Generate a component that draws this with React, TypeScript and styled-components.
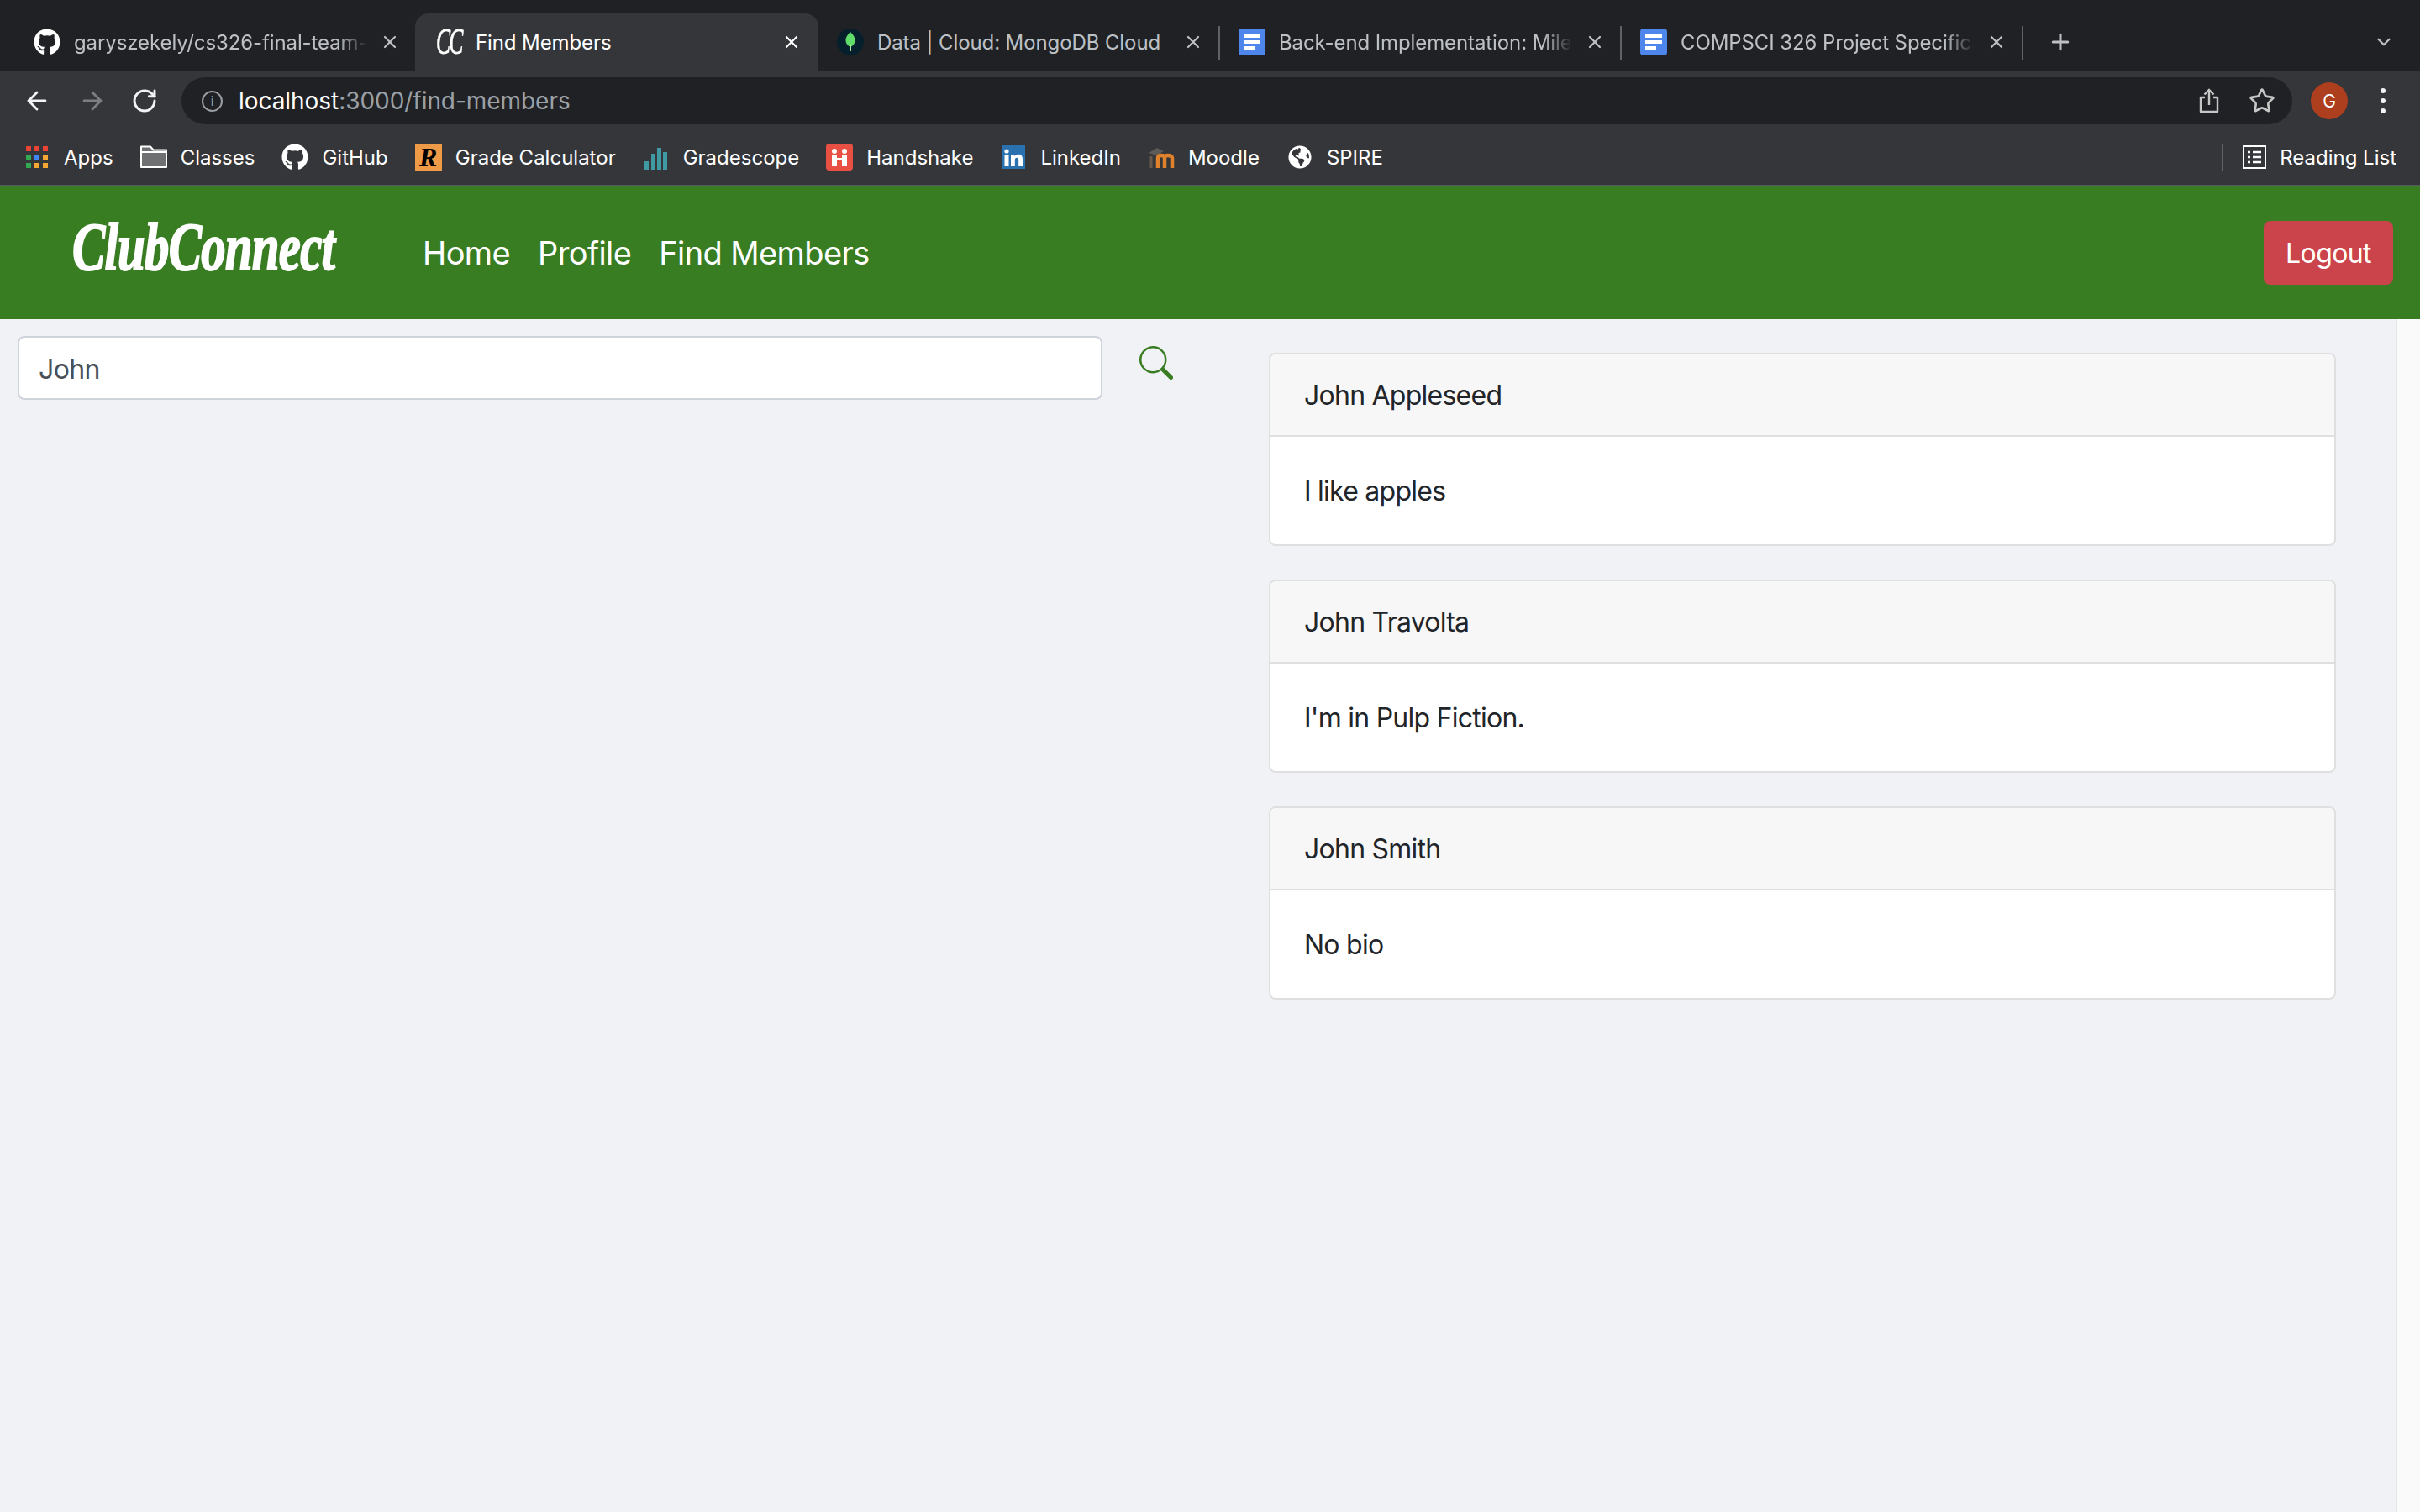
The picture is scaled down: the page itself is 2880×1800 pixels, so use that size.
import React from 'react';
import styled, { createGlobalStyle } from 'styled-components';
import { ArrowLeft, ArrowRight, ChevronDown, Plus, RotateCw, Star, X } from 'lucide-react';
import { BsSearch } from 'react-icons/bs';
import { FaGithub, FaGlobeAmericas } from 'react-icons/fa';

const GlobalStyle = createGlobalStyle`
  html, body {
    margin: 0;
    padding: 0;
    width: 2880px;
    height: 1800px;
    overflow: hidden;
    font-family: Inter, "Liberation Sans", sans-serif;
  }
  * { box-sizing: border-box; }
`;

const Page = styled.div`
  width: 2880px;
  height: 1800px;
  display: flex;
  flex-direction: column;
  background: #f0f2f5;
`;

/* browser chrome */
const TabStrip = styled.div`
  height: 84px;
  flex: none;
  display: flex;
  align-items: flex-end;
  padding-left: 16px;
  background: #202124;
`;

const Tab = styled.div<{ $active?: boolean; $divider?: boolean }>`
  position: relative;
  width: ${(p) => (p.$active ? 480 : 478)}px;
  height: 68px;
  flex: none;
  margin-right: ${(p) => (p.$active ? -2 : 0)}px;
  display: flex;
  align-items: center;
  padding: 0 ${(p) => (p.$active ? 20 : 18)}px 0 24px;
  border-radius: 16px 16px 0 0;
  background: ${(p) => (p.$active ? '#35363a' : 'transparent')};
  color: ${(p) => (p.$active ? '#ffffff' : '#bdc1c6')};

  ${(p) =>
    p.$divider &&
    `&::after {
      content: '';
      position: absolute;
      right: -2px;
      top: 15px;
      width: 2px;
      height: 40px;
      background: #5f6368;
    }`}
`;

const TabIcon = styled.span`
  width: 32px;
  height: 32px;
  flex: none;
  display: flex;
  align-items: center;
  justify-content: center;
  margin-right: 16px;
  color: #ffffff;
`;

const CcMark = styled.span`
  flex: none;
  font-family: "Liberation Serif", serif;
  font-style: italic;
  font-size: 44px;
  line-height: 32px;
  letter-spacing: -3px;
  transform: scaleX(0.58);
  color: #ffffff;
  -webkit-text-stroke: 0.8px #ffffff;
`;

const TabTitle = styled.span<{ $fade?: boolean }>`
  flex: 1;
  min-width: 0;
  overflow: hidden;
  white-space: nowrap;
  font-size: 24px;
  letter-spacing: -0.1px;
  ${(p) =>
    p.$fade &&
    `mask-image: linear-gradient(to right, #000 90%, transparent 100%);`}
`;

const TabClose = styled.span`
  width: 24px;
  height: 24px;
  flex: none;
  margin-left: 15px;
  display: flex;
  align-items: center;
  justify-content: center;
  color: inherit;
`;

const NewTab = styled.span`
  height: 68px;
  flex: none;
  margin-left: 31px;
  display: flex;
  align-items: center;
  color: #bdc1c6;
`;

const TabMenu = styled.span`
  height: 68px;
  flex: none;
  margin-left: auto;
  margin-right: 30px;
  display: flex;
  align-items: center;
  color: #bdc1c6;
`;

const Toolbar = styled.div`
  height: 76px;
  flex: none;
  display: flex;
  align-items: center;
  gap: 26px;
  padding: 0 30px 4px 24px;
  background: #35363a;
`;

const NavButton = styled.span<{ $dim?: boolean; $width?: number }>`
  width: ${(p) => p.$width ?? 40}px;
  flex: none;
  display: flex;
  justify-content: center;
  color: ${(p) => (p.$dim ? '#7c7e82' : '#f1f3f4')};
`;

const AddressBar = styled.div`
  flex: 1;
  height: 56px;
  margin-left: 2px;
  margin-right: -4px;
  display: flex;
  align-items: center;
  padding: 0 20px 0 24px;
  border-radius: 28px;
  background: #202124;
`;

const InfoIcon = styled.span`
  width: 25px;
  height: 25px;
  flex: none;
  margin-right: 19px;
  display: flex;
  align-items: center;
  justify-content: center;
  border: 2.5px solid #9aa0a6;
  border-radius: 50%;
  color: #9aa0a6;
  font-size: 15px;
  line-height: 1;
`;

const Url = styled.span`
  font-size: 28px;
  letter-spacing: -0.05px;
  color: #9aa0a6;

  b {
    font-weight: 400;
    color: #ffffff;
  }
`;

const BarActions = styled.span`
  margin-left: auto;
  display: flex;
  align-items: center;
  gap: 35px;
  color: #c4c7c5;
`;

const Avatar = styled.span`
  width: 44px;
  height: 44px;
  flex: none;
  display: flex;
  align-items: center;
  justify-content: center;
  border-radius: 50%;
  background: #ad3f1f;
  color: #ffffff;
  font-size: 21px;
`;

const MenuDots = styled.span`
  width: 6px;
  flex: none;
  margin-left: 13px;
  margin-right: 11px;
  display: flex;
  flex-direction: column;
  gap: 6px;

  i {
    width: 6px;
    height: 6px;
    border-radius: 50%;
    background: #f1f3f4;
  }
`;

const BookmarkBar = styled.div`
  height: 62px;
  flex: none;
  display: flex;
  align-items: center;
  gap: 32px;
  padding: 0 28px 6px 28px;
  border-bottom: 2px solid #5a5b5e;
  background: #35363a;
`;

const Bookmark = styled.span`
  display: flex;
  align-items: center;
  gap: 16px;
  color: #ffffff;
  font-size: 24px;
  white-space: nowrap;
`;

const BookmarkIcon = styled.span`
  width: 32px;
  height: 32px;
  flex: none;
  display: flex;
  align-items: center;
  justify-content: center;
  color: #ffffff;
`;

const RMark = styled.span`
  width: 32px;
  height: 32px;
  display: flex;
  align-items: center;
  justify-content: center;
  background: #ef9a47;
  color: #000000;
  font-family: "Liberation Serif", serif;
  font-style: italic;
  font-weight: 700;
  font-size: 32px;
`;

const ReadingList = styled(Bookmark)`
  height: 32px;
  margin-left: auto;
  padding-left: 23px;
  border-left: 2px solid #5f6368;
`;

/* app */
const NavBar = styled.header`
  height: 158px;
  flex: none;
  display: flex;
  align-items: center;
  padding: 0 32px 0 86px;
  background: #387d22;
`;

const Brand = styled.span`
  width: 417px;
  flex: none;
  margin-top: -14px;
  font-family: "Liberation Serif", serif;
  font-style: italic;
  font-weight: 700;
  font-size: 80px;
  letter-spacing: -1px;
  line-height: 1;
  white-space: nowrap;
  color: #ffffff;
  -webkit-text-stroke: 2px #ffffff;
  transform: scaleX(0.735);
  transform-origin: left center;
`;

const NavLinks = styled.nav`
  display: flex;
  gap: 33px;
`;

const NavLink = styled.a`
  font-size: 38px;
  letter-spacing: -0.6px;
  color: #ffffff;
`;

const LogoutButton = styled.button`
  width: 154px;
  height: 76px;
  margin-left: auto;
  border: none;
  border-radius: 8px;
  background: #cc444b;
  color: #ffffff;
  font-family: inherit;
  font-size: 32px;
  letter-spacing: -0.6px;
`;

const Main = styled.main`
  flex: 1;
  display: flex;
`;

const SearchPanel = styled.section`
  width: 1510px;
  flex: none;
  display: flex;
  align-items: flex-start;
  gap: 44px;
  padding: 20px 0 0 21px;
`;

const SearchInput = styled.input`
  width: 1291px;
  height: 76px;
  flex: none;
  padding: 2px 23px 0;
  border: 2px solid #ced4da;
  border-radius: 8px;
  outline: none;
  background: #ffffff;
  color: #495057;
  font-family: inherit;
  font-size: 32px;
  letter-spacing: -0.6px;
`;

const SearchButton = styled.span`
  display: flex;
  margin-top: 12px;
  color: #387d22;
`;

const CardList = styled.section`
  width: 1270px;
  flex: none;
  display: flex;
  flex-direction: column;
  gap: 40px;
  padding-top: 40px;
`;

const Card = styled.article`
  height: 230px;
  display: flex;
  flex-direction: column;
  border: 2px solid #dfdfdf;
  border-radius: 8px;
  background: #ffffff;
  overflow: hidden;
  color: #212529;
  font-size: 32px;
  letter-spacing: -0.75px;
`;

const CardHeader = styled.div`
  height: 98px;
  flex: none;
  display: flex;
  align-items: center;
  padding: 0 40px;
  border-bottom: 2px solid #dfdfdf;
  background: #f7f7f7;
`;

const CardBody = styled.div`
  flex: 1;
  display: flex;
  align-items: center;
  padding: 0 40px;
`;

const Scrollbar = styled.div`
  width: 29px;
  flex: none;
  margin-left: auto;
  border-left: 2px solid #e8e8e8;
  background: #fafafa;
`;

const DocIcon = () => (
  <svg width="32" height="32" viewBox="0 0 32 32">
    <rect width="32" height="32" rx="4" fill="#4f86ec" />
    <rect x="6" y="7" width="20" height="4" fill="#fff" />
    <rect x="6" y="14" width="20" height="4" fill="#fff" />
    <rect x="6" y="21" width="13" height="4" fill="#fff" />
  </svg>
);

const MongoIcon = () => (
  <svg width="32" height="32" viewBox="0 0 32 32">
    <circle cx="16" cy="16" r="16" fill="#061f2c" />
    <path d="M16 4c5 5 7 9 4.500 14-1 2-3 3-4.500 4-1.500-1-3.500-2-4.500-4C9 13 11 9 16 4z" fill="#5fdc6a" />
    <rect x="15" y="20" width="2" height="7" fill="#a7e8a0" />
  </svg>
);

const AppsIcon = () => (
  <svg width="26" height="26" viewBox="0 0 26 26">
    {[
      ['#ea4335', '#ea4335', '#ea4335'],
      ['#34a853', '#4285f4', '#f4a733'],
      ['#34a853', '#f4a733', '#f4a733'],
    ].map((row, y) =>
      row.map((fill, x) => (
        <rect key={`${x}-${y}`} x={x * 10} y={y * 10} width="6" height="6" fill={fill} />
      )),
    )}
  </svg>
);

const FolderIcon = () => (
  <svg width="32" height="28" viewBox="0 0 32 28">
    <path d="M1 26V1.500h11l3.500 4H31V26z" fill="#6f7072" stroke="#fff" strokeWidth="2" strokeLinejoin="round" />
    <path d="M1 8h30" stroke="#fff" strokeWidth="2" />
  </svg>
);

const GradescopeIcon = () => (
  <svg width="30" height="30" viewBox="0 0 30 30">
    <rect x="1" y="20" width="5" height="10" fill="#3f9aa3" />
    <rect x="9" y="11" width="5" height="19" fill="#3f9aa3" />
    <rect x="16" y="4" width="5" height="26" fill="#3f9aa3" />
    <rect x="23" y="9" width="5" height="21" fill="#3f9aa3" />
  </svg>
);

const HandshakeIcon = () => (
  <svg width="32" height="32" viewBox="0 0 32 32">
    <rect width="32" height="32" rx="4" fill="#e94f43" />
    <circle cx="10" cy="9" r="3" fill="#fff" />
    <circle cx="22" cy="9" r="3" fill="#fff" />
    <rect x="7" y="14" width="6" height="13" fill="#fff" />
    <rect x="19" y="14" width="6" height="13" fill="#fff" />
    <rect x="12" y="17" width="8" height="3" fill="#fff" />
  </svg>
);

const LinkedInIcon = () => (
  <svg width="28" height="28" viewBox="0 0 28 28">
    <rect width="28" height="28" fill="#2a71b0" />
    <circle cx="6" cy="7" r="2.600" fill="#fff" />
    <rect x="3.500" y="11" width="5" height="14" fill="#fff" />
    <path d="M11 11h4.600v2c1-1.500 2.400-2.300 4.400-2.300 3.600 0 5 2.200 5 6V25h-4.800v-7.400c0-1.800-.6-2.900-2-2.900-1.600 0-2.400 1.100-2.400 3V25H11z" fill="#fff" />
  </svg>
);

const MoodleIcon = () => (
  <svg width="32" height="28" viewBox="0 0 32 28" fill="none">
    <path d="M1 9l10-6 8 4-9 5z" fill="#5d5a58" />
    <path d="M4 27V13" stroke="#6b5a4c" strokeWidth="3" />
    <path d="M12 27V15c0-2 1.500-3 4-3s4 1 4 3v12M20 15c0-2 1.500-3 4-3s5 1 5 3v12" stroke="#e0812c" strokeWidth="4.500" />
  </svg>
);

const ReadingListIcon = () => (
  <svg width="28" height="28" viewBox="0 0 28 28">
    <rect x="1" y="1" width="26" height="26" fill="none" stroke="#fff" strokeWidth="2" />
    <path d="M6 8h3M6 14h3M6 20h3M12 8h10M12 14h10M12 20h10" stroke="#fff" strokeWidth="2.500" />
  </svg>
);

const ShareIcon = () => (
  <svg width="24" height="30" viewBox="0 0 24 30" fill="none" stroke="currentColor" strokeWidth="2.400">
    <path d="M7 11H2v17h20V11h-5" strokeLinejoin="round" />
    <path d="M12 20V2M6.500 7.500L12 2l5.500 5.500" />
  </svg>
);

const tabs = [
  { title: 'garyszekely/cs326-final-team-project', icon: <FaGithub size={32} />, fade: true },
  { title: 'Find Members', icon: <CcMark>CC</CcMark>, active: true },
  { title: 'Data | Cloud: MongoDB Cloud', icon: <MongoIcon />, divider: true },
  { title: 'Back-end Implementation: Milestone', icon: <DocIcon />, fade: true, divider: true },
  { title: 'COMPSCI 326 Project Specification', icon: <DocIcon />, fade: true, divider: true },
];

const bookmarks = [
  { label: 'Apps', icon: <AppsIcon /> },
  { label: 'Classes', icon: <FolderIcon /> },
  { label: 'GitHub', icon: <FaGithub size={32} /> },
  { label: 'Grade Calculator', icon: <RMark>R</RMark> },
  { label: 'Gradescope', icon: <GradescopeIcon /> },
  { label: 'Handshake', icon: <HandshakeIcon /> },
  { label: 'LinkedIn', icon: <LinkedInIcon /> },
  { label: 'Moodle', icon: <MoodleIcon /> },
  { label: 'SPIRE', icon: <FaGlobeAmericas size={28} /> },
];

const members = [
  { name: 'John Appleseed', bio: 'I like apples' },
  { name: 'John Travolta', bio: "I'm in Pulp Fiction." },
  { name: 'John Smith', bio: 'No bio' },
];

export default function App() {
  return (
    <Page>
      <GlobalStyle />
      <TabStrip>
        {tabs.map((tab) => (
          <Tab key={tab.title} $active={tab.active} $divider={tab.divider}>
            <TabIcon>{tab.icon}</TabIcon>
            <TabTitle $fade={tab.fade}>{tab.title}</TabTitle>
            <TabClose>
              <X size={24} strokeWidth={2.2} />
            </TabClose>
          </Tab>
        ))}
        <NewTab>
          <Plus size={30} strokeWidth={2.4} />
        </NewTab>
        <TabMenu>
          <ChevronDown size={26} strokeWidth={2.2} />
        </TabMenu>
      </TabStrip>

      <Toolbar>
        <NavButton>
          <ArrowLeft size={34} strokeWidth={2} />
        </NavButton>
        <NavButton $dim>
          <ArrowRight size={34} strokeWidth={2} />
        </NavButton>
        <NavButton $width={32}>
          <RotateCw size={32} strokeWidth={2.2} />
        </NavButton>
        <AddressBar>
          <InfoIcon>i</InfoIcon>
          <Url>
            <b>localhost</b>:3000/find-members
          </Url>
          <BarActions>
            <ShareIcon />
            <Star size={32} strokeWidth={2} />
          </BarActions>
        </AddressBar>
        <Avatar>G</Avatar>
        <MenuDots>
          <i />
          <i />
          <i />
        </MenuDots>
      </Toolbar>

      <BookmarkBar>
        {bookmarks.map((bookmark) => (
          <Bookmark key={bookmark.label}>
            <BookmarkIcon>{bookmark.icon}</BookmarkIcon>
            {bookmark.label}
          </Bookmark>
        ))}
        <ReadingList>
          <ReadingListIcon />
          Reading List
        </ReadingList>
      </BookmarkBar>

      <NavBar>
        <Brand>ClubConnect</Brand>
        <NavLinks>
          <NavLink>Home</NavLink>
          <NavLink>Profile</NavLink>
          <NavLink>Find Members</NavLink>
        </NavLinks>
        <LogoutButton>Logout</LogoutButton>
      </NavBar>

      <Main>
        <SearchPanel>
          <SearchInput defaultValue="John" />
          <SearchButton>
            <BsSearch size={40} />
          </SearchButton>
        </SearchPanel>
        <CardList>
          {members.map((member) => (
            <Card key={member.name}>
              <CardHeader>{member.name}</CardHeader>
              <CardBody>{member.bio}</CardBody>
            </Card>
          ))}
        </CardList>
        <Scrollbar />
      </Main>
    </Page>
  );
}
